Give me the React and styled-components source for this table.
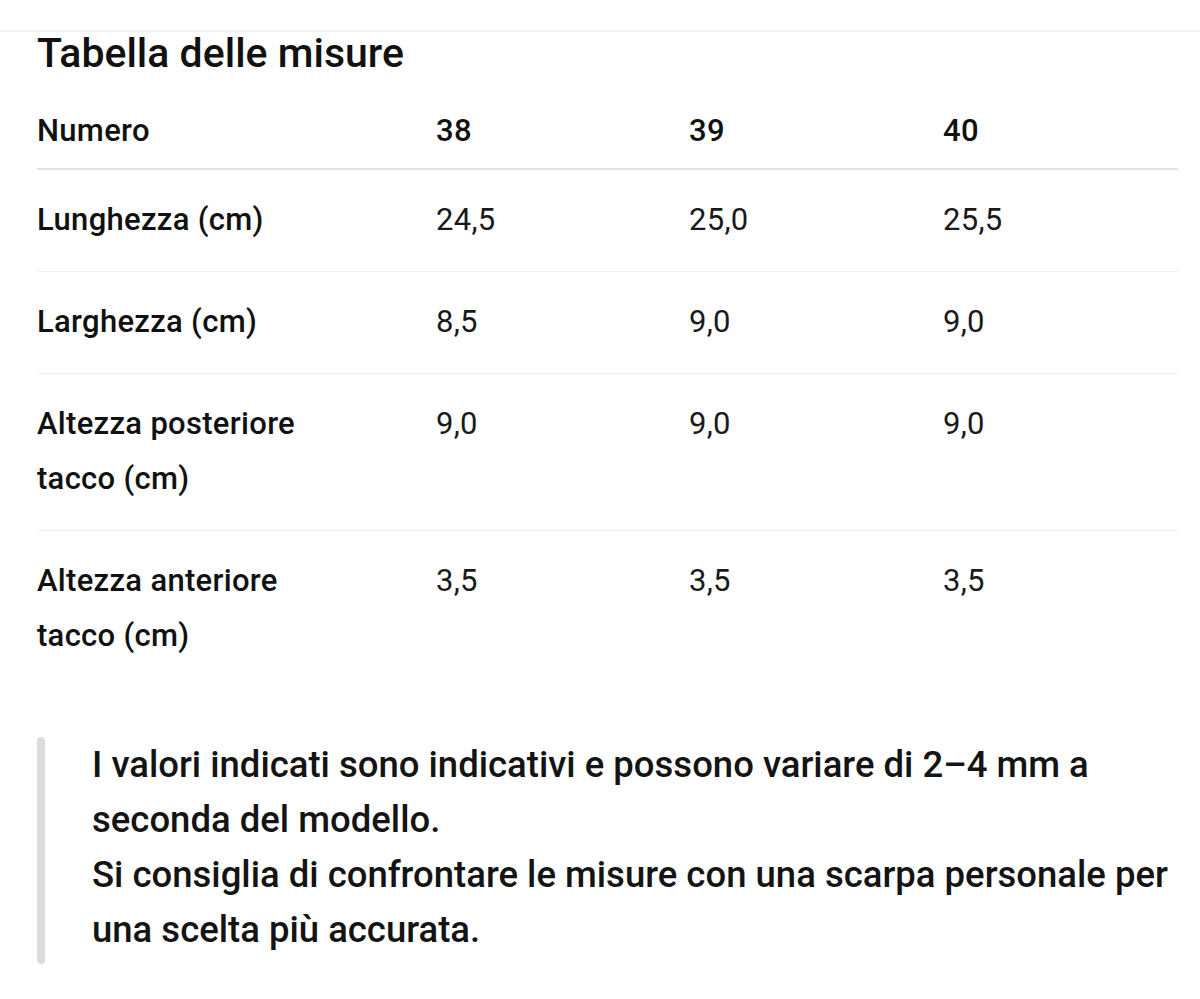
import React from "react";
import styled, { createGlobalStyle } from "styled-components";

const Global = createGlobalStyle`
  html, body { margin: 0; padding: 0; background: #fff; }
  body { font-family: Roboto, "Noto Sans", Arial, sans-serif; color: #141414; }
`;

const Page = styled.div`
  padding-top: 30px;
`;

const Section = styled.section`
  border-top: 2px solid #f1f1f1;
  padding: 1px 22px 0 37px;
`;

const Title = styled.h2`
  margin: 0;
  font-size: 41px;
  line-height: 40px;
  font-weight: 500;
  color: #111;
`;

const Table = styled.table`
  width: 1141px;
  margin-top: 8px;
  border-collapse: collapse;
  table-layout: fixed;
  font-size: 31px;
  letter-spacing: 0.3px;
  line-height: 55px;
`;

const HeadCell = styled.th`
  text-align: left;
  font-weight: 500;
  padding: 22px 0 10px;
  border-bottom: 2px solid #e2e2e2;
  color: #111;
  vertical-align: top;
`;

const Row = styled.tr`
  border-bottom: ${(p) => (p.$last ? "none" : "1px solid #f1f1f1")};
`;

const LabelCell = styled.td`
  font-weight: 500;
  padding: 22px 100px 24px 0;
  vertical-align: top;
  color: #111;
`;

const ValueCell = styled.td`
  font-weight: 400;
  padding: 22px 0 24px;
  vertical-align: top;
  color: #1a1a1a;
`;

const Note = styled.blockquote`
  margin: 50px 0 0;
  display: flex;
  gap: 47px;
  width: 1141px;
`;

const Bar = styled.div`
  flex: 0 0 8px;
  width: 8px;
  border-radius: 4px;
  background: #dcdcdc;
`;

const NoteText = styled.p`
  margin: 0 0 7px;
  font-size: 36.5px;
  line-height: 55px;
  font-weight: 500;
  color: #141414;
`;

const cols = [399, 253, 254, 235];
const sizes = ["38", "39", "40"];
const rows = [
  { label: "Lunghezza (cm)", values: ["24,5", "25,0", "25,5"] },
  { label: "Larghezza (cm)", values: ["8,5", "9,0", "9,0"] },
  { label: "Altezza posteriore tacco (cm)", values: ["9,0", "9,0", "9,0"] },
  { label: "Altezza anteriore tacco (cm)", values: ["3,5", "3,5", "3,5"] },
];

export default function App() {
  return (
    <Page>
      <Global />
      <Section>
        <Title>Tabella delle misure</Title>
        <Table>
          <colgroup>
            {cols.map((w, i) => (
              <col key={i} style={{ width: w }} />
            ))}
          </colgroup>
          <thead>
            <tr>
              <HeadCell>Numero</HeadCell>
              {sizes.map((s) => (
                <HeadCell key={s}>{s}</HeadCell>
              ))}
            </tr>
          </thead>
          <tbody>
            {rows.map((r, i) => (
              <Row key={r.label} $last={i === rows.length - 1}>
                <LabelCell>{r.label}</LabelCell>
                {r.values.map((v, j) => (
                  <ValueCell key={j}>{v}</ValueCell>
                ))}
              </Row>
            ))}
          </tbody>
        </Table>
        <Note>
          <Bar />
          <NoteText>
            I valori indicati sono indicativi e possono variare di 2–4 mm a
            seconda del modello.
            <br />
            Si consiglia di confrontare le misure con una scarpa personale per
            una scelta più accurata.
          </NoteText>
        </Note>
      </Section>
    </Page>
  );
}
